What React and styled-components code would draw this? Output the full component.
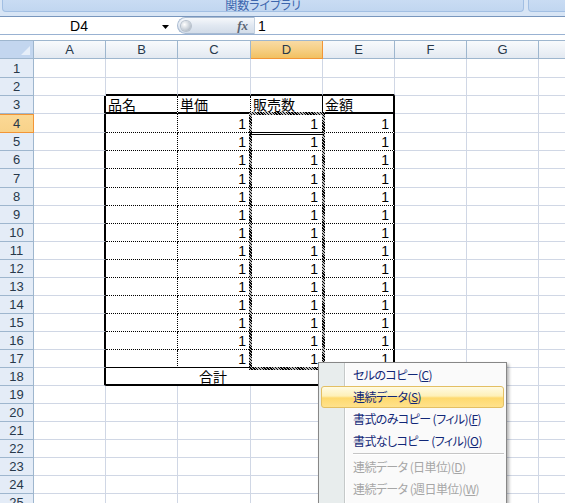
import React from 'react';
import styled, { createGlobalStyle } from 'styled-components';

const GlobalStyle = createGlobalStyle`
  html, body { margin: 0; padding: 0; background: #fff; }
  body { font-family: "Liberation Sans", "Noto Sans CJK JP", sans-serif; overflow: hidden; }
`;

const Page = styled.div`
  position: relative;
  width: 565px;
  height: 503px;
  overflow: hidden;
  background: #fff;
`;

/* ---------- ribbon remnant ---------- */
const Ribbon = styled.div`
  height: 16px;
  box-sizing: border-box;
  background: #d8e5f5;
  display: flex;
  gap: 4px;
  padding-left: 2px;
`;

const RibbonGroup = styled.div`
  flex: 0 0 ${p => p.$w}px;
  height: 12px;
  box-sizing: border-box;
  background: linear-gradient(#c9dcf3, #c1d6f0);
  border: 1px solid #a2bfe3;
  border-top: none;
  border-radius: 0 0 4px 4px;
  display: flex;
  justify-content: center;
  align-items: flex-end;
  overflow: hidden;
`;

const GroupLabel = styled.span`
  font-family: "Noto Sans CJK JP", sans-serif;
  font-feature-settings: "palt";
  font-size: 12px;
  line-height: 13px;
  color: #3d66ad;
  white-space: nowrap;
`;

/* ---------- formula bar ---------- */
const FormulaBar = styled.div`
  display: flex;
  height: 19px;
  box-sizing: border-box;
  border-top: 1px solid #7896bd;
  border-bottom: 1px solid #99b2d2;
  background: #fff;
`;

const NameBox = styled.div`
  flex: 0 0 177px;
  display: flex;
  align-items: center;
`;

const NameText = styled.span`
  flex: 1;
  text-align: center;
  font-size: 14px;
  color: #000;
`;

const DropArrow = styled.svg`
  width: 7px;
  height: 4px;
  margin: 2px 8px 0 4px;
`;

const FxPill = styled.div`
  flex: 0 0 78px;
  box-sizing: border-box;
  display: flex;
  align-items: center;
  justify-content: space-between;
  padding: 0 6px 0 3px;
  border: 1px solid #a9bbd2;
  border-right: 1px solid #c4d1e0;
  border-radius: 9px 0 0 9px;
  background: linear-gradient(#f6f8fb, #e1e8f1 50%, #d3dde9);
`;

const FxKnob = styled.span`
  width: 10px;
  height: 10px;
  border-radius: 50%;
  background: radial-gradient(circle at 35% 35%, #ffffff, #c4ccd5 60%, #939da8);
  box-shadow: 0 0 0 1px #b7c1cc;
`;

const FxLabel = styled.span`
  font-family: "Liberation Serif", serif;
  font-style: italic;
  font-weight: bold;
  font-size: 13px;
  color: #5b6574;
`;

const FormulaInput = styled.div`
  flex: 1;
  display: flex;
  align-items: center;
  padding-left: 3px;
  font-size: 14px;
  color: #000;
`;

const Spacer = styled.div`
  height: 5px;
  background: #fff;
`;

/* ---------- sheet ---------- */
const Sheet = styled.div`
  display: grid;
  grid-template-columns: 34px 72px 72px 73px 72px 72px 72px 72px 72px;
  grid-template-rows: ${p => p.$rows};
  border-top: 1px solid #9eb6ce;
  background: #fff;
`;

const Corner = styled.div`
  grid-row: 1;
  grid-column: 1;
  box-sizing: border-box;
  border-right: 1px solid #9eb6ce;
  border-bottom: 1px solid #9eb6ce;
  background: #c3d6ef;
  display: flex;
  justify-content: flex-end;
  align-items: flex-end;
  padding: 0 3px 3px 0;
`;

const CornerTri = styled.svg`
  width: 9px;
  height: 9px;
`;

const ColHeader = styled.div`
  grid-row: 1;
  grid-column: ${p => p.$gc};
  box-sizing: border-box;
  border-right: 1px solid ${p => (p.$sel ? '#f29536' : '#9eb6ce')};
  border-bottom: 1px solid ${p => (p.$sel ? '#f29536' : '#9eb6ce')};
  background: ${p =>
    p.$sel
      ? 'linear-gradient(#f9dba4, #f6cf85 50%, #f2c161)'
      : 'linear-gradient(#f8fafc, #eef2f7 50%, #e3e9f1)'};
  display: flex;
  align-items: center;
  justify-content: center;
  font-size: 13px;
  color: #27384a;
`;

const RowHeader = styled.div`
  grid-row: ${p => p.$gr};
  grid-column: 1;
  box-sizing: border-box;
  border-right: 1px solid ${p => (p.$sel ? '#f29536' : '#9eb6ce')};
  border-bottom: 1px solid ${p => (p.$sel ? '#f29536' : '#9eb6ce')};
  ${p => p.$sel && 'box-shadow: inset 0 1px 0 #f29536;'}
  background: ${p => (p.$sel ? 'linear-gradient(#fbd996, #f8d28a)' : '#e4ecf7')};
  display: flex;
  align-items: center;
  justify-content: center;
  font-size: 13px;
  color: #27384a;
`;

const borderMap = {
  grid: '1px solid #d0d7e5',
  thin: '1px solid #000',
  dot: '1px dotted #000',
  thick: '2px solid #000',
};

const Cell = styled.div`
  grid-row: ${p => p.$gr};
  grid-column: ${p => p.$gc} / span ${p => p.$span || 1};
  box-sizing: border-box;
  min-width: 0;
  border-right: ${p => borderMap[p.$r || 'grid']};
  border-bottom: ${p => borderMap[p.$b || 'grid']};
  display: flex;
  align-items: flex-end;
  justify-content: ${p =>
    p.$align === 'right' ? 'flex-end' : p.$align === 'center' ? 'center' : 'flex-start'};
  padding: 0 4px 0 2px;
  font-family: ${p =>
    p.$jp ? '"Noto Sans CJK JP", sans-serif' : '"Liberation Sans", sans-serif'};
  font-size: 14px;
  line-height: 16px;
  color: #000;
  white-space: nowrap;
`;

const SelectionFrame = styled.div`
  grid-row: 5 / 19;
  grid-column: 5;
  z-index: 2;
  pointer-events: none;
  margin: -2px;
  border: 3px solid #000;
  border-image: repeating-linear-gradient(45deg, #000 0 1px, #bbb 1px 2px) 3;
`;

const ActiveEdge = styled.div`
  grid-row: 5;
  grid-column: 5;
  z-index: 3;
  pointer-events: none;
  margin: 0 -1px -2px -1px;
  border-bottom: 3px double #000;
`;

/* ---------- context menu ---------- */
const Menu = styled.div`
  position: absolute;
  left: 318px;
  top: 362px;
  width: 189px;
  height: 150px;
  box-sizing: border-box;
  border: 1px solid #878787;
  padding-top: 1px;
  background: linear-gradient(
    to right,
    #e8eded 0 25px,
    #c5c9c9 25px 26px,
    #ffffff 26px 27px,
    #fafafa 27px
  );
  box-shadow: 2px 2px 3px rgba(0, 0, 0, 0.3);
  display: flex;
  flex-direction: column;
  font-family: "Noto Sans CJK JP", sans-serif;
  font-feature-settings: "palt";
  z-index: 10;
`;

const MenuItem = styled.div`
  height: 22px;
  box-sizing: border-box;
  margin: 0 2px;
  padding-left: 31px;
  border: 1px solid ${p => (p.$active ? '#e3bf63' : 'transparent')};
  border-radius: 3px;
  background: ${p =>
    p.$active
      ? 'linear-gradient(#fffbe4 0%, #fef0b8 45%, #fed96e 55%, #ffe28c 100%)'
      : 'transparent'};
  display: flex;
  align-items: center;
  font-size: 12px;
  letter-spacing: -0.6px;
  line-height: 20px;
  color: ${p => (p.$disabled ? '#a6a6a6' : '#112777')};
  white-space: nowrap;
`;

const MenuSep = styled.div`
  height: 1px;
  margin: 1px 2px 1px 34px;
  background: #c5c5c5;
  border-bottom: 1px solid #fff;
`;

const rowHeights = [19, 18, 18, 19, 18, 18, 19, ...Array(18).fill(18)];
const COLS = ['A', 'B', 'C', 'D', 'E', 'F', 'G', 'H'];

function cellSpec(r, c) {
  const s = {};
  if (r === 2 && c >= 1 && c <= 4) s.b = 'thick';
  if (r >= 3 && r <= 18 && c === 0) s.r = 'thick';
  if (r === 3 && c >= 1 && c <= 4) {
    s.b = 'thick';
    s.r = c === 4 ? 'thick' : c === 3 ? 'thin' : 'dot';
    s.jp = true;
    s.text = ['品名', '単価', '販売数', '金額'][c - 1];
  }
  if (r >= 4 && r <= 17 && c >= 1 && c <= 4) {
    s.b = r === 17 ? 'thin' : 'dot';
    s.r = c === 4 ? 'thick' : c === 3 ? 'thin' : 'dot';
    if (c >= 2) {
      s.text = '1';
      s.align = 'right';
    }
  }
  if (r === 18) {
    if (c === 1) {
      s.span = 3;
      s.b = 'thick';
      s.r = 'thin';
      s.jp = true;
      s.align = 'center';
      s.text = '合計';
    }
    if (c === 2 || c === 3) s.skip = true;
    if (c === 4) {
      s.b = 'thick';
      s.r = 'thick';
    }
  }
  return s;
}

const menuItems = [
  { label: 'セルのコピー', key: 'C' },
  { label: '連続データ', key: 'S', active: true },
  { label: '書式のみコピー (フィル)', key: 'F' },
  { label: '書式なしコピー (フィル)', key: 'O' },
  { sep: true },
  { label: '連続データ (日単位)', key: 'D', disabled: true },
  { label: '連続データ (週日単位)', key: 'W', disabled: true },
];

export default function App() {
  const rowsTemplate = ['18px', ...rowHeights.map(h => `${h}px`)].join(' ');
  const cells = [];
  rowHeights.forEach((_, i) => {
    const r = i + 1;
    const gr = r + 1;
    cells.push(
      <RowHeader key={`rh${r}`} $gr={gr} $sel={r === 4}>
        {r}
      </RowHeader>
    );
    COLS.forEach((_, c) => {
      const s = cellSpec(r, c);
      if (s.skip) return;
      cells.push(
        <Cell
          key={`c${r}-${c}`}
          $gr={gr}
          $gc={c + 2}
          $span={s.span}
          $r={s.r}
          $b={s.b}
          $align={s.align}
          $jp={s.jp}
        >
          {s.text}
        </Cell>
      );
    });
  });

  return (
    <Page>
      <GlobalStyle />
      <Ribbon>
        <RibbonGroup $w={522}>
          <GroupLabel>関数ライブラリ</GroupLabel>
        </RibbonGroup>
        <RibbonGroup $w={60} />
      </Ribbon>
      <FormulaBar>
        <NameBox>
          <NameText>D4</NameText>
          <DropArrow viewBox="0 0 7 4">
            <path d="M0 0 H7 L3.5 4 Z" fill="#000" />
          </DropArrow>
        </NameBox>
        <FxPill>
          <FxKnob />
          <FxLabel>fx</FxLabel>
        </FxPill>
        <FormulaInput>1</FormulaInput>
      </FormulaBar>
      <Spacer />
      <Sheet $rows={rowsTemplate}>
        <Corner>
          <CornerTri viewBox="0 0 9 9">
            <path d="M9 0 V9 H0 Z" fill="#e6eef9" />
          </CornerTri>
        </Corner>
        {COLS.map((l, c) => (
          <ColHeader key={l} $gc={c + 2} $sel={l === 'D'}>
            {l === 'H' ? '' : l}
          </ColHeader>
        ))}
        {cells}
        <SelectionFrame />
        <ActiveEdge />
      </Sheet>
      <Menu>
        {menuItems.map((m, i) =>
          m.sep ? (
            <MenuSep key={i} />
          ) : (
            <MenuItem key={i} $active={m.active} $disabled={m.disabled}>
              {m.label}(<u>{m.key}</u>)
            </MenuItem>
          )
        )}
      </Menu>
    </Page>
  );
}
